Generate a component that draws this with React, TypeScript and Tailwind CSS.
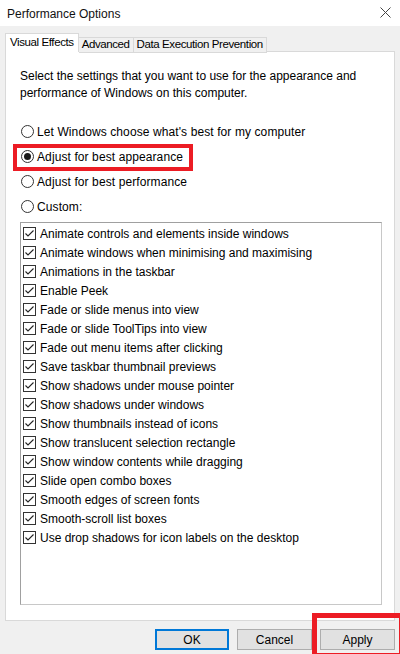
import React from "react";

const items = [
  "Animate controls and elements inside windows",
  "Animate windows when minimising and maximising",
  "Animations in the taskbar",
  "Enable Peek",
  "Fade or slide menus into view",
  "Fade or slide ToolTips into view",
  "Fade out menu items after clicking",
  "Save taskbar thumbnail previews",
  "Show shadows under mouse pointer",
  "Show shadows under windows",
  "Show thumbnails instead of icons",
  "Show translucent selection rectangle",
  "Show window contents while dragging",
  "Slide open combo boxes",
  "Smooth edges of screen fonts",
  "Smooth-scroll list boxes",
  "Use drop shadows for icon labels on the desktop",
];

const radios = [
  { label: "Let Windows choose what's best for my computer", checked: false },
  { label: "Adjust for best appearance", checked: true },
  { label: "Adjust for best performance", checked: false },
  { label: "Custom:", checked: false },
];

function Radio({ checked }: { checked: boolean }) {
  return (
    <div className="w-[13px] h-[13px] rounded-full border border-[#333333] bg-white flex items-center justify-center shrink-0">
      {checked && <div className="w-[7px] h-[7px] rounded-full bg-[#1a1a1a]" />}
    </div>
  );
}

function Check() {
  return (
    <div className="w-[13px] h-[13px] border border-[#333333] bg-white shrink-0 flex items-center justify-center">
      <svg width="11" height="11" viewBox="0 0 11 11">
        <path d="M1.5 5.5 L4 8 L9.5 2.5" fill="none" stroke="#222" strokeWidth="1.1" />
      </svg>
    </div>
  );
}

export default function App() {
  return (
    <div
      className="relative w-[400px] h-[654px] bg-[#f0f0f0] flex flex-col overflow-hidden text-black text-[12px]"
      style={{ fontFamily: '"Liberation Sans", Arial, sans-serif' }}
    >
      {/* Title bar */}
      <div className="h-[26px] bg-white flex items-center justify-between pl-[7px] pr-[9px] shrink-0">
        <span className="text-[12px] text-[#111] mt-[1px]">Performance Options</span>
        <svg width="11" height="11" viewBox="0 0 11 11" className="mt-[-2px]">
          <path d="M0.5 0.5 L10.5 10.5 M10.5 0.5 L0.5 10.5" stroke="#444" strokeWidth="1" />
        </svg>
      </div>

      {/* Tabs */}
      <div className="ml-[5px] mt-[7px] flex items-end h-[19px] relative z-10 whitespace-nowrap text-[11.5px] tracking-[-0.4px]">
        <div className="h-[19px] bg-white border border-b-0 border-[#d9d9d9] px-[4px] flex items-center">
          Visual Effects
        </div>
        <div className="h-[16px] bg-[#f0f0f0] border border-l-0 border-[#d9d9d9] flex items-center px-[3px] mb-[-1px]">
          Advanced
        </div>
        <div className="h-[16px] bg-[#f0f0f0] border border-l-0 border-[#d9d9d9] flex items-center px-[3px] mb-[-1px]">
          Data Execution Prevention
        </div>
      </div>

      {/* Panel */}
      <div className="ml-[5px] w-[390px] h-[570px] mt-[-1px] bg-white border border-[#d9d9d9] flex flex-col pl-[14px] pr-[11px]">
        <div className="mt-[16px] leading-[17px]">
          <div>Select the settings that you want to use for the appearance and</div>
          <div>performance of Windows on this computer.</div>
        </div>

        <div className="mt-[17px] flex flex-col">
          {radios.map((r) => (
            <div key={r.label} className="h-[25px] flex items-center gap-[3px] ml-[1px]">
              <Radio checked={r.checked} />
              <span className="tracking-[0.1px]">{r.label}</span>
            </div>
          ))}
        </div>

        <div className="mt-[3px] h-[383px] w-[362px] border border-[#a0a0a0] border-r-[#c8c8c8] border-b-[#c8c8c8] bg-white pt-[1px] pl-[2px]">
          {items.map((it) => (
            <div key={it} className="h-[19px] flex items-center gap-[4px]">
              <Check />
              <span>{it}</span>
            </div>
          ))}
        </div>
      </div>

      {/* Buttons */}
      <div className="flex justify-end gap-[8px] mt-[8px] pr-[5px]">
        <button className="w-[74px] h-[21px] bg-[#e1e1e1] border-2 border-[#0078d7] flex items-center justify-center">
          OK
        </button>
        <button className="w-[75px] h-[21px] bg-[#e1e1e1] border border-[#adadad] flex items-center justify-center">
          Cancel
        </button>
        <button className="w-[75px] h-[21px] bg-[#e1e1e1] border border-[#adadad] flex items-center justify-center">
          Apply
        </button>
      </div>

      {/* Annotation boxes */}
      <div className="absolute left-[13px] top-[144px] w-[180px] h-[27px] border-[4px] border-[#ec1c24] pointer-events-none" />
      <div className="absolute left-[312px] top-[613px] w-[92px] h-[45px] border-[5px] border-[#ec1c24] pointer-events-none" />
    </div>
  );
}
